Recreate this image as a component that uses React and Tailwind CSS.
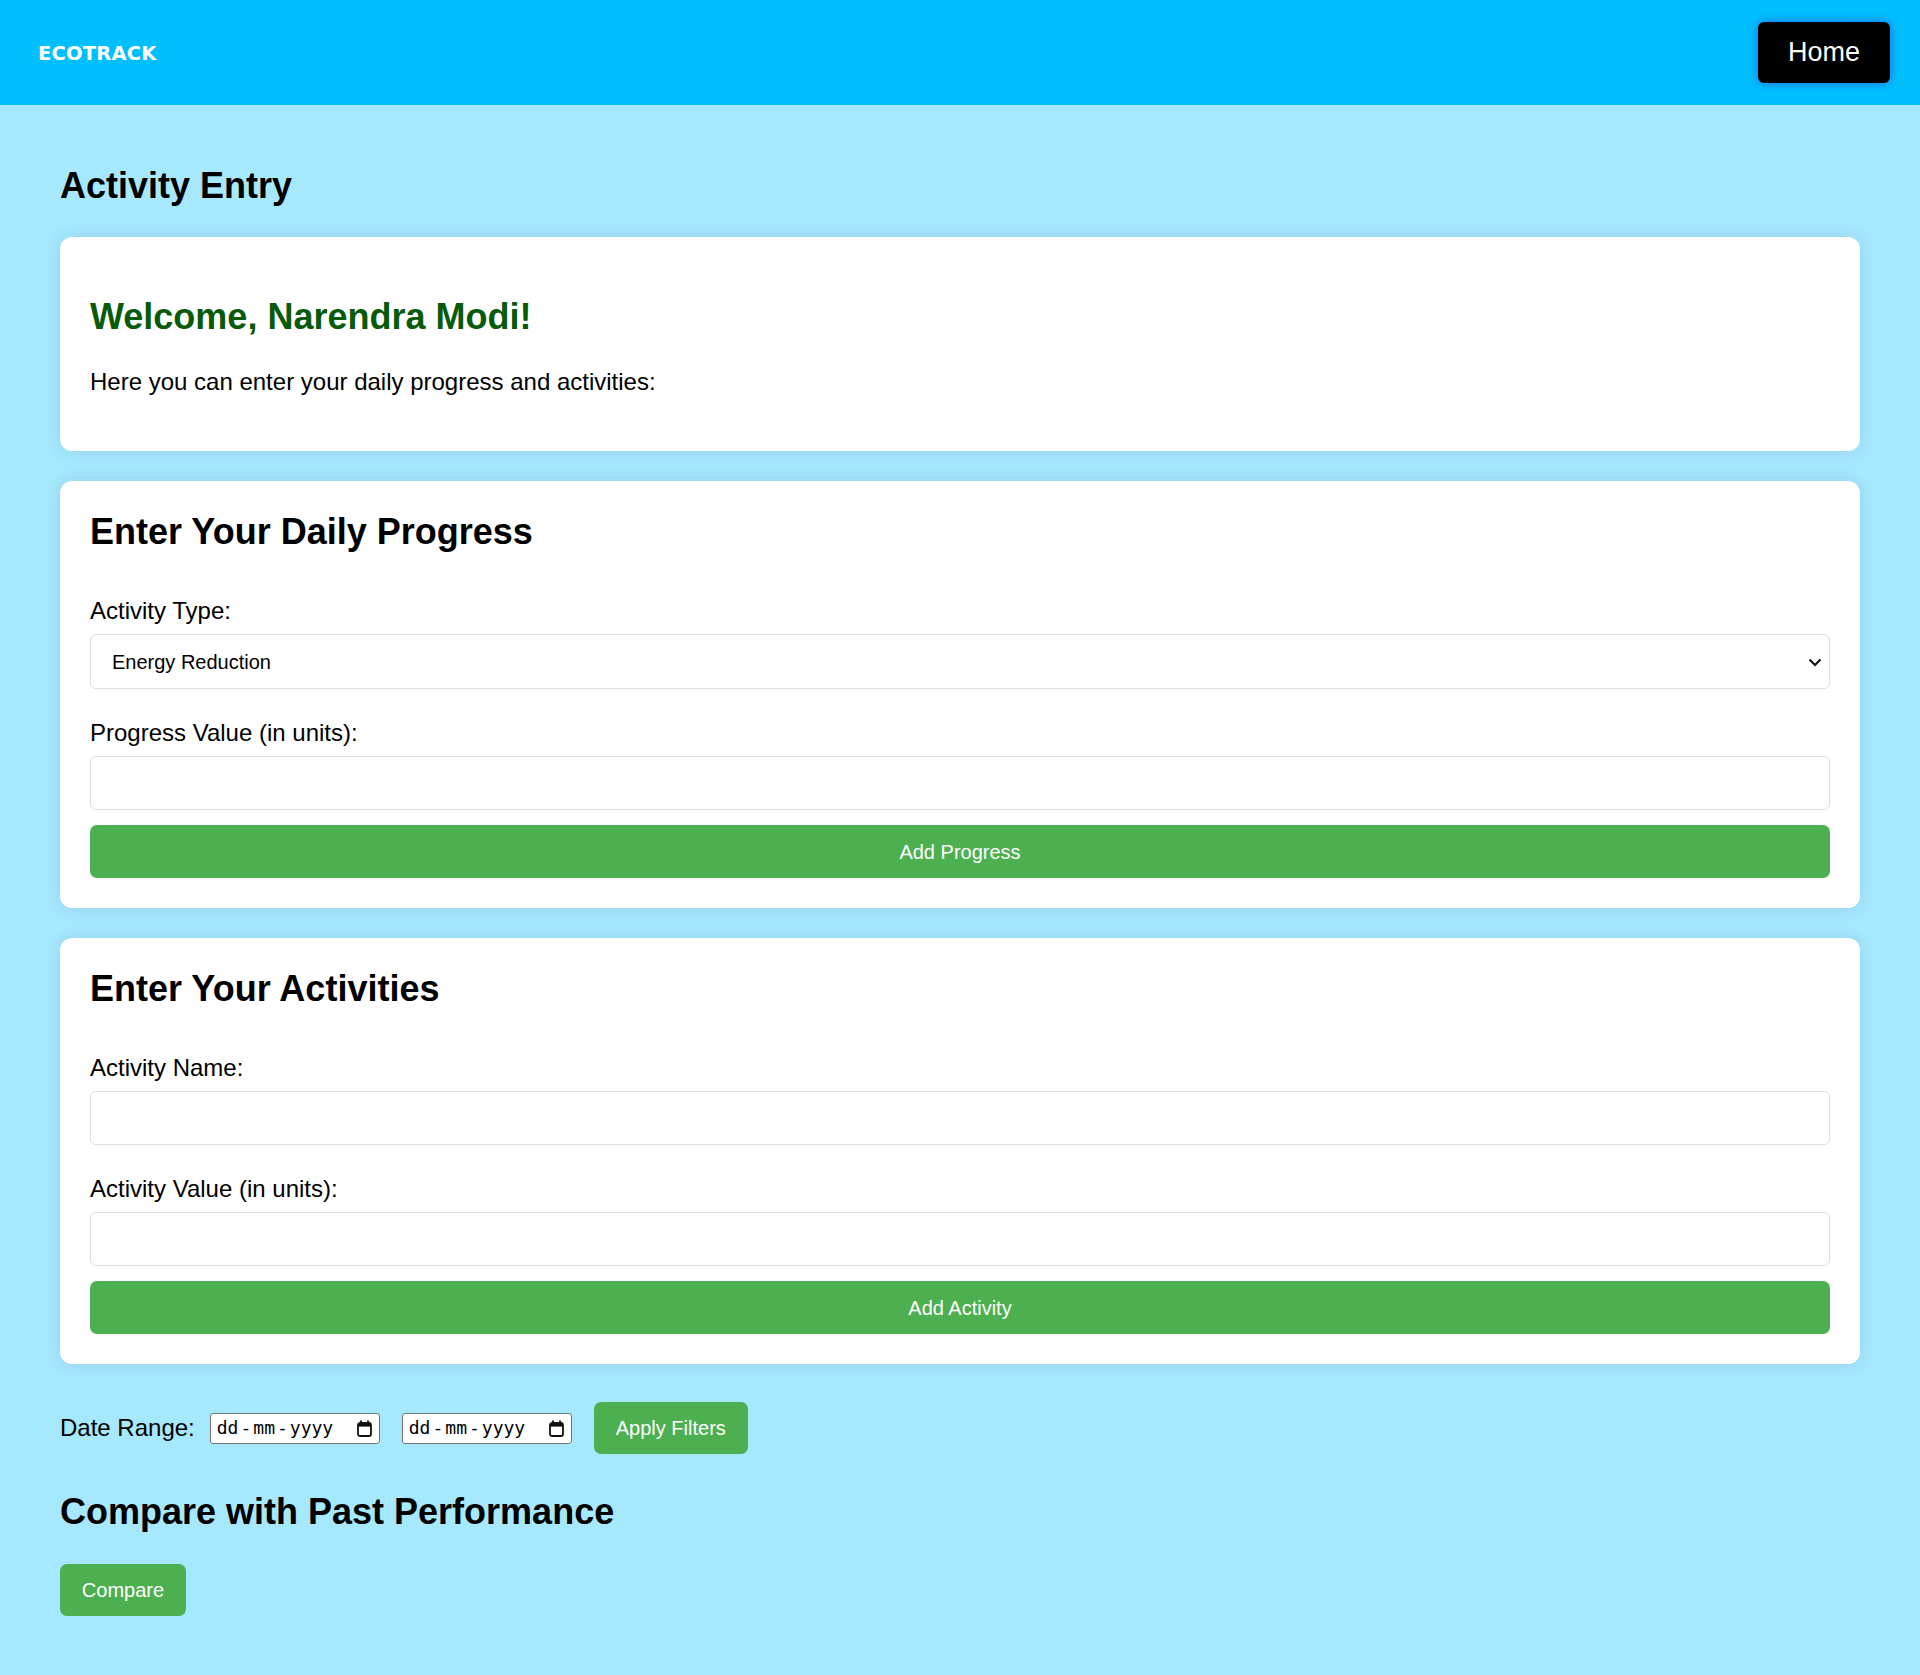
import React from "react";

const Label = ({ children }) => (
  <label className="block text-[24px] leading-[27.6px] mb-[9.5px]">{children}</label>
);

const TextInput = ({ last }) => (
  <input
    type="text"
    className={
      last
        ? "block w-full h-[54px] bg-white border border-[#dedede] rounded-[6px] mb-[15px] px-[15px] text-[20px] outline-none"
        : "block w-full h-[54px] bg-white border border-[#dedede] rounded-[6px] mb-[30px] px-[15px] text-[20px] outline-none"
    }
  />
);

const GreenButton = ({ children }) => (
  <button className="block w-full h-[53px] bg-[#4caf50] text-white text-[20px] rounded-[7px]">{children}</button>
);

const CalendarIcon = () => (
  <svg width="15" height="17" viewBox="0 0 15 17" fill="none">
    <rect x="1" y="3" width="13" height="13" rx="2" stroke="#111" strokeWidth="1.8" />
    <rect x="1" y="3" width="13" height="3.6" fill="#111" />
    <line x1="4" y1="0.6" x2="4" y2="4" stroke="#111" strokeWidth="1.8" />
    <line x1="11" y1="0.6" x2="11" y2="4" stroke="#111" strokeWidth="1.8" />
  </svg>
);

const DateField = () => (
  <div className="w-[170px] h-[31px] bg-white border border-[#767676] rounded-[3px] flex items-center justify-between pl-[6px] pr-[7px]">
    <div className="flex items-center gap-[2px] font-['DejaVu_Sans_Mono',monospace] text-[18px] leading-none text-black">
      <span>dd</span>
      <span>-</span>
      <span>mm</span>
      <span>-</span>
      <span>yyyy</span>
    </div>
    <CalendarIcon />
  </div>
);

const Card = ({ children }) => (
  <section className="bg-white rounded-[12px] p-[30px] flex flex-col shadow-[0_0_16px_rgba(0,60,120,0.12)]">
    {children}
  </section>
);

export default function App() {
  return (
    <div className="min-h-screen bg-[#a6e8fd] text-black font-['Liberation_Sans',Arial,sans-serif]">
      <header className="h-[105px] bg-[#00bfff] flex items-center justify-between pl-[38px] pr-[30px]">
        <span className="mt-[3px] text-white font-bold text-[19.5px] tracking-[0.2px] font-['DejaVu_Sans',sans-serif]">
          ECOTRACK
        </span>
        <button className="w-[132px] h-[61px] bg-black text-white text-[27px] rounded-[6px] shadow-[0_0_10px_rgba(40,90,230,0.85)]">
          Home
        </button>
      </header>

      <main className="px-[60px] pt-[60px] pb-[59px]">
        <h1 className="text-[36px] font-bold leading-[41px] mb-[31px]">Activity Entry</h1>

        <div className="flex flex-col gap-[30px]">
          <Card>
            <h2 className="text-[36px] font-bold leading-[41px] text-[#075a07] mt-[29px] mb-[31px]">
              Welcome, Narendra Modi!
            </h2>
            <p className="text-[24px] leading-[28px] mb-[25px]">Here you can enter your daily progress and activities:</p>
          </Card>

          <Card>
            <h2 className="text-[36px] font-bold leading-[41px] mb-[45px]">Enter Your Daily Progress</h2>
            <Label>Activity Type:</Label>
            <div className="relative mb-[30px]">
              <select className="block w-full h-[55px] appearance-none bg-white border border-[#dedede] rounded-[6px] pl-[21px] pr-[40px] text-[20px] outline-none">
                <option>Energy Reduction</option>
                <option>Water Conservation</option>
                <option>Waste Reduction</option>
              </select>
              <svg
                className="absolute right-[8px] top-[24px] pointer-events-none"
                width="14"
                height="9"
                viewBox="0 0 14 9"
                fill="none"
              >
                <path d="M1.5 1.5 L7 7 L12.5 1.5" stroke="#111" strokeWidth="2.2" />
              </svg>
            </div>
            <Label>Progress Value (in units):</Label>
            <TextInput last />
            <GreenButton>Add Progress</GreenButton>
          </Card>

          <Card>
            <h2 className="text-[36px] font-bold leading-[41px] mb-[45px]">Enter Your Activities</h2>
            <Label>Activity Name:</Label>
            <TextInput />
            <Label>Activity Value (in units):</Label>
            <TextInput last />
            <GreenButton>Add Activity</GreenButton>
          </Card>
        </div>

        <div className="flex items-center mt-[38px]">
          <span className="text-[24px] mr-[15px]">Date Range:</span>
          <div className="mr-[22px]">
            <DateField />
          </div>
          <div className="mr-[22px]">
            <DateField />
          </div>
          <button className="h-[52px] px-[22px] bg-[#4caf50] text-white text-[20px] rounded-[7px]">Apply Filters</button>
        </div>

        <h2 className="text-[36px] font-bold leading-[41px] mt-[37px] mb-[32px]">Compare with Past Performance</h2>
        <button className="h-[52px] w-[126px] bg-[#4caf50] text-white text-[20px] rounded-[7px]">Compare</button>
      </main>
    </div>
  );
}
